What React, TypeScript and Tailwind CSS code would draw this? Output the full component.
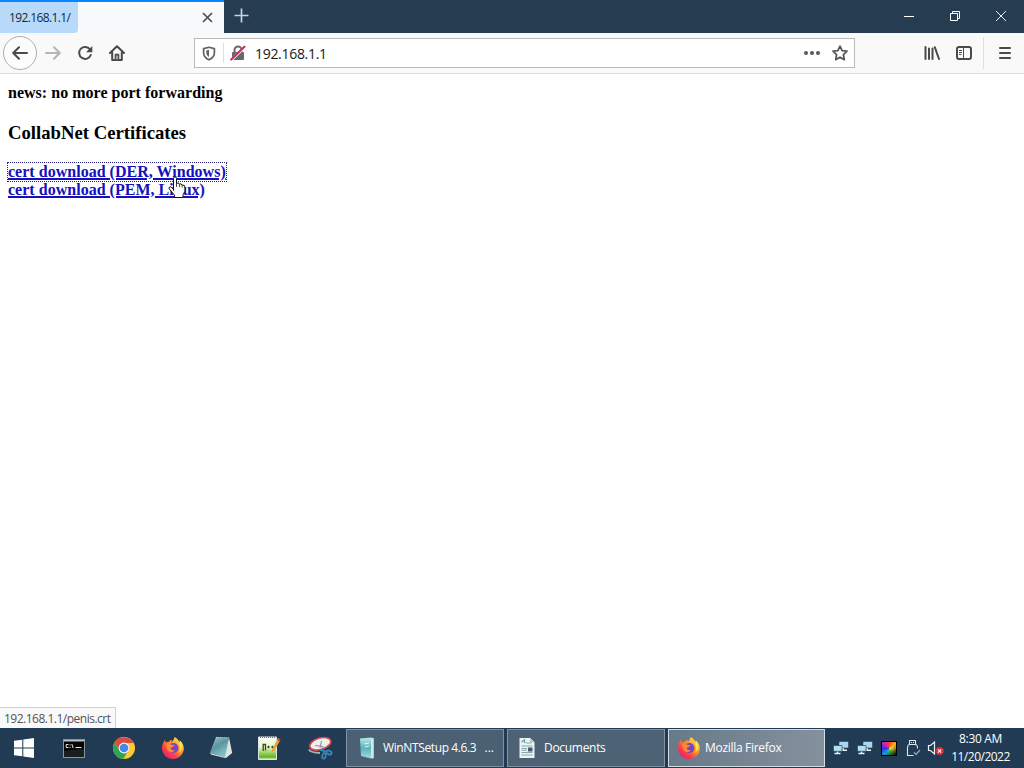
import React from 'react';

interface IconProps {
  className?: string;
}

const BackIcon: React.FC<IconProps> = ({ className }) => (
  <svg className={className} width="16" height="16" viewBox="0 0 16 16" fill="none" stroke="#4a4a4c" strokeWidth="2" strokeLinecap="round" strokeLinejoin="round">
    <path d="M15 8H1.6M7 2.2L1.2 8L7 13.8" />
  </svg>
);

const ForwardIcon = () => (
  <svg width="16" height="16" viewBox="0 0 16 16" fill="none" stroke="#b5b5b7" strokeWidth="2" strokeLinecap="round" strokeLinejoin="round">
    <path d="M1 8h13.4M9 2.2L14.8 8L9 13.8" />
  </svg>
);

const ReloadIcon = () => (
  <svg width="16" height="16" viewBox="0 0 16 16" fill="none">
    <path d="M13.2 4.6A6 6 0 1 0 13.8 10" stroke="#4a4a4c" strokeWidth="2" strokeLinecap="round" />
    <path d="M15.3 .9V7.2H9z" fill="#4a4a4c" />
  </svg>
);

const HomeIcon = () => (
  <svg width="16" height="16" viewBox="0 0 16 16" fill="none" stroke="#4a4a4c" strokeWidth="2" strokeLinecap="round" strokeLinejoin="round">
    <path d="M1 8L8 1.2L15 8M3.2 7.5V15h9.6V7.5" />
    <path d="M6.2 14V9.2h3.6V14" fill="#4a4a4c" strokeWidth="1" />
    <path d="M8 11v3" stroke="#f9f9fa" strokeWidth="1" />
  </svg>
);

const ShieldIcon = () => (
  <svg width="14" height="15" viewBox="0 0 14 15" fill="none">
    <path d="M7 1.2L12.4 2.6V6.5C12.4 10 10.3 12.4 7 13.8C3.7 12.4 1.6 10 1.6 6.5V2.6z" stroke="#626264" strokeWidth="1.7" strokeLinejoin="round" />
    <path d="M7 3.8V11C5 9.8 4.3 8.4 4.3 6.5V4.4z" fill="#626264" />
  </svg>
);

const LockIcon = () => (
  <svg width="16" height="16" viewBox="0 0 16 16" fill="none">
    <path d="M4.5 8V5a3.5 3.5 0 0 1 7 0v3" stroke="#69696b" strokeWidth="2" />
    <rect x="2" y="7" width="12" height="8" rx="1" fill="#69696b" />
    <path d="M1 15.2L14.8 2" stroke="#fff" strokeWidth="2.8" />
    <path d="M1.2 14.4L14.4 1.8" stroke="#d7264f" strokeWidth="2.1" strokeLinecap="round" />
  </svg>
);

const StarIcon = () => (
  <svg width="16" height="16" viewBox="0 0 16 16" fill="none" stroke="#58585a" strokeWidth="1.8" strokeLinejoin="round">
    <path d="M8 1.2L10.1 5.6L15 6.2L11.4 9.6L12.3 14.6L8 12.2L3.7 14.6L4.6 9.6L1 6.2L5.9 5.6z" />
  </svg>
);

const LibraryIcon = () => (
  <svg width="16" height="16" viewBox="0 0 16 16" fill="none" stroke="#4a4a4c" strokeWidth="2" strokeLinecap="round">
    <path d="M1.5 2v12M5 3.4V14M8.5 3.4V14M10.8 2.2L15 14" />
  </svg>
);

const SidebarIcon = () => (
  <svg width="16" height="14" viewBox="0 0 16 14" fill="none" stroke="#4a4a4c">
    <rect x="1" y="1" width="14" height="12" rx="2" strokeWidth="2" />
    <path d="M7.5 1v12" strokeWidth="1" />
    <path d="M3 4.5h3M3 6.5h3M3 8.5h2.4" strokeWidth="1" />
  </svg>
);

const WindowsLogo = () => (
  <svg width="20" height="20" viewBox="0 0 20 20" fill="#fff">
    <path d="M0 2.8L8.3 1.7V9.5H0zM9.3 1.5L20 0V9.5H9.3zM0 10.5H8.3V18.3L0 17.2zM9.3 10.5H20V20L9.3 18.5z" />
  </svg>
);

const TerminalIcon = () => (
  <svg width="22" height="19" viewBox="0 0 22 19" fill="none">
    <rect x=".5" y=".5" width="21" height="18" fill="#050505" stroke="#8d9498" />
    <path d="M1 1h20v1.5H1z" fill="#b9bec1" />
    <path d="M5.5 5.5H3.2v3h2.3M7 5.5v1M7 8v1M8.8 5l1.4 4M12.5 8.5h6" stroke="#e6e6e6" />
    <path d="M1 12L21 9.5V18H1z" fill="#1c1d1f" />
  </svg>
);

const ChromeIcon = () => (
  <svg width="24" height="24" viewBox="0 0 24 24">
    <circle cx="12" cy="12" r="11" fill="#fbcb32" />
    <path d="M2.5 6.5A11 11 0 0 1 21.6 7H12a5 5 0 0 0-4.7 6.6z" fill="#df4a3c" />
    <path d="M2.5 6.5A11 11 0 0 0 11.3 23L16.2 14.6A5 5 0 0 1 7.5 14.3z" fill="#30a455" />
    <circle cx="12" cy="12" r="5.4" fill="#f2f2f2" />
    <circle cx="12" cy="12" r="4.3" fill="#4688e8" />
  </svg>
);

const FirefoxIcon = () => (
  <svg width="24" height="24" viewBox="0 0 24 24">
    <defs>
      <linearGradient id="fox" x1=".9" y1=".1" x2=".2" y2=".9">
        <stop offset="0" stopColor="#ffe34a" />
        <stop offset=".4" stopColor="#ff9a28" />
        <stop offset=".72" stopColor="#ff4545" />
        <stop offset="1" stopColor="#e62470" />
      </linearGradient>
    </defs>
    <path d="M4.2 3.6C4 5 4.4 5.8 4.8 6.4C5.8 5.8 6.8 5.6 8 5.7C9 4.4 10 4 11 4C10.4 5 10.3 5.6 10.5 6.2C12 5 13 3.4 13.4 1C16.2 2.3 17.6 4.4 18.5 6.2C18.8 5.6 18.8 5 18.6 4.2C21.8 6.7 23.2 10 22.8 13.5C22 19 17.5 23 12 23C6 23 1 18.3 1 12.5C1 9 2.2 6 4.2 3.6z" fill="url(#fox)" />
    <path d="M13.6 1.4C16.6 3.4 18 6 18.2 8.8C19.8 12 19 15.6 16.6 17.4C20.8 15.6 22.2 11 20.8 7.6C20.4 6.5 19.6 5.4 18.9 4.8C18.8 6 18.8 6.4 18.4 7C17.4 4.5 15.9 2.4 13.6 1.4z" fill="#ffe052" />
    <circle cx="12.4" cy="12" r="5" fill="#7546c8" />
    <path d="M5 8.2C7 7 9 7.2 10.2 8.8C11.4 9 12.6 9 13.4 9.4C12.6 11 10.4 10.8 9.6 12.2C10 14 12 14.8 14 13.7C12.8 16.6 9.4 16.9 7.2 14.8C5.6 13.2 5 10.8 5 8.2z" fill="#ff8738" />
  </svg>
);

const NotepadIcon = () => (
  <svg width="24" height="24" viewBox="0 0 24 24">
    <defs>
      <linearGradient id="note" x1="0" y1="0" x2=".6" y2="1">
        <stop offset="0" stopColor="#a5c9cc" />
        <stop offset=".5" stopColor="#5d959e" />
        <stop offset="1" stopColor="#8ac6ca" />
      </linearGradient>
    </defs>
    <path d="M20 1.6L23.2 17L17 22L14.5 20z" fill="#dfe4e2" />
    <path d="M7 1L20 1.6L16.2 21L.8 17z" fill="url(#note)" />
    <path d="M.8 17L16.2 21L17 22.2L2.4 18.8z" fill="#d1dad9" />
    <path d="M7.2 1.4L20 2" stroke="#c7dadb" strokeDasharray="1 1" />
  </svg>
);

const NotepadPlusIcon = () => (
  <svg width="24" height="24" viewBox="0 0 24 24">
    <defs>
      <linearGradient id="npp" x1="0" y1="0" x2="0" y2="1">
        <stop offset="0" stopColor="#fff" />
        <stop offset=".45" stopColor="#e8f6c8" />
        <stop offset=".9" stopColor="#5fb51c" />
        <stop offset="1" stopColor="#f0f5ea" />
      </linearGradient>
    </defs>
    <path d="M1.5 1h18v22.5h-18z" fill="url(#npp)" stroke="#dfe6da" strokeWidth="1" />
    <path d="M3 1.5h16" stroke="#667078" strokeDasharray="1 1" />
    <path d="M6.2 15V8.5h2.3v6" fill="none" stroke="#364925" strokeWidth="1.3" />
    <path d="M10 11h3M14 11h3M11.5 9.8v2.4M15.5 9.8v2.4" stroke="#364925" />
    <path d="M21 2L23.4 4L17.5 14.5L14.6 16.4L15.4 12.8z" fill="#e5a434" />
    <path d="M21 2L23.4 4L22.4 5.6L20 3.7z" fill="#c94c3e" />
  </svg>
);

const SnippingIcon = () => (
  <svg width="26" height="24" viewBox="0 0 26 24" fill="none">
    <path d="M2 13.5Q3 16.5 13 17" stroke="#a8afb5" strokeWidth="2" />
    <ellipse cx="13.3" cy="7.8" rx="10.8" ry="5.7" transform="rotate(-17 13.3 7.8)" fill="#f1efed" stroke="#d9464c" strokeWidth="1.6" />
    <path d="M8 9.5L16.5 10.5M13 12L14.5 5" stroke="#8a9196" strokeWidth="1.1" />
    <ellipse cx="17" cy="20" rx="1.7" ry="2.6" transform="rotate(15 17 20)" stroke="#3686b5" strokeWidth="1.8" />
    <ellipse cx="22" cy="16.5" rx="2.7" ry="1.8" transform="rotate(25 22 16.5)" stroke="#3686b5" strokeWidth="1.8" />
    <path d="M15.5 11.5L17.5 18M13 14L20 15.8" stroke="#3686b5" strokeWidth="1.6" />
  </svg>
);

const SetupIcon = () => (
  <svg width="16" height="24" viewBox="0 0 16 24">
    <defs>
      <linearGradient id="setup" x1="0" y1="0" x2="0" y2="1">
        <stop offset="0" stopColor="#b8eaec" />
        <stop offset=".5" stopColor="#58b4bd" />
        <stop offset="1" stopColor="#a0dde0" />
      </linearGradient>
    </defs>
    <path d="M0 2.5L11 1.5V22.5L1 20z" fill="url(#setup)" />
    <path d="M11 1.5L13.8 2.3V22.2L11 22.5z" fill="#cfe9e9" />
    <path d="M4 8L9 7M5 11l4-1" stroke="#dcf6f6" />
  </svg>
);

const DocumentIcon = () => (
  <svg width="16" height="22" viewBox="0 0 16 22">
    <path d="M.5 1h10.7L15.5 5.3V21H.5z" fill="#edf2f4" />
    <path d="M11 1v4.5h4.5z" fill="#bac8cd" />
    <path d="M2.5 5L5.5 2.8V6" fill="none" stroke="#5ca5aa" strokeWidth="1.2" />
    <path d="M6.5 6h6M2.5 9h11M2.5 15.5h11M2.5 18h11M2.5 11.5H8M2.5 13.2H8" stroke="#8ba6b3" />
    <path d="M9 10.5h4.5v4H9z" fill="#435a6a" />
  </svg>
);

const NetworkIcon = () => (
  <svg width="16" height="16" viewBox="0 0 16 16">
    <path d="M6 1.5h9.5v6.5H6z" fill="#a8d8ee" stroke="#27445a" strokeWidth=".6" />
    <path d="M10 8v2.2h4M1.5 13.5h6M4.5 11v2.5" stroke="#edf4f7" strokeWidth="1.5" fill="none" />
    <path d="M.5 5.5h8.5v5.8H.5z" fill="#b5e0f2" stroke="#27445a" strokeWidth=".7" />
  </svg>
);

const UsbIcon = () => (
  <svg width="15" height="18" viewBox="0 0 15 18" fill="none" stroke="#dce4e9">
    <path d="M3.5 5.5V1.5h6v4M1.5 9.5Q1.5 5.5 3.5 5.5h6Q11.5 5.5 11.5 9.5M1.5 9v7.5h6M5.5 3v1M7.5 3v1" strokeWidth="1.1" />
    <path d="M8 13.2l2 2.3l4-4.5" stroke="#91a2ad" strokeWidth="1.3" />
  </svg>
);

const SpeakerIcon = () => (
  <svg width="17" height="16" viewBox="0 0 17 16" fill="none">
    <path d="M1.5 5.5h2L7.5 2v12L3.5 10.5h-2z" stroke="#edf4f7" strokeWidth="1.2" />
    <circle cx="12.6" cy="11" r="4.2" fill="#d52f3a" />
    <path d="M10.9 9.3l3.4 3.4M14.3 9.3l-3.4 3.4" stroke="#fff" strokeWidth="1.2" />
  </svg>
);

const ColorIcon = () => (
  <div className="h-[15px] w-4 border border-black bg-[conic-gradient(from_0deg,#ff3b1f,#ff9d1c,#ffe02e,#8fe02c,#19d58a,#168de8,#3b30d8,#c126c5,#ff3b1f)] bg-origin-border">
    <div className="h-full w-full bg-linear-to-tl from-black via-transparent via-45% to-transparent" />
  </div>
);

const HandCursor = () => (
  <svg className="absolute left-[168px] top-[102px]" width="18" height="23" viewBox="0 0 18 23">
    <path d="M5.5 14.5V2.5Q5.5.8 7 .8T8.5 2.5V7.5Q11 6 11.3 8.2Q13.6 7 14 9.2Q16.9 8.4 16.9 11V15.2L15 18.8V21.5H6.5V19.2L1.2 12.8Q.4 11 2.4 10.8Q3.5 11 5.5 13.4z" fill="#fff" stroke="#111" strokeWidth="1" />
    <path d="M8.5 7.5v3.5M11.4 8.5v2.5M14.1 9.5v2" stroke="#111" strokeWidth=".8" />
  </svg>
);

const TabStrip = () => (
  <div className="flex h-[33px] bg-[#263c50]">
    <div className="flex w-56 items-center justify-between border-t-2 border-[#0a84ff] bg-[#f8f9fa] pr-[11px]">
      <div className="flex h-[31px] w-[78px] items-center rounded-br-sm bg-[#b7d9fa] pl-[9px]">
        <span className="text-xs tracking-[-0.62px] text-[#15283b]">192.168.1.1/</span>
      </div>
      <svg width="11" height="11" viewBox="0 0 11 11" stroke="#4a4a4c" strokeWidth="1.6">
        <path d="M1 1l9 9M10 1l-9 9" />
      </svg>
    </div>
    <div className="flex w-[34px] items-center justify-center pb-0.5">
      <svg width="15" height="15" viewBox="0 0 15 15" stroke="#cbd4dc" strokeWidth="1.7">
        <path d="M7.5 .5v14M.5 7.5h14" />
      </svg>
    </div>
    <div className="ml-auto flex h-8">
      <div className="flex w-[46px] items-center justify-center">
        <div className="h-px w-2.5 bg-white" />
      </div>
      <div className="flex w-[46px] items-center justify-center">
        <svg width="10" height="10" viewBox="0 0 10 10" fill="none" stroke="#fff">
          <path d="M.5 2.5h7v7h-7zM2.5 2.5v-2h7v7h-2" />
        </svg>
      </div>
      <div className="flex w-[46px] items-center justify-center">
        <svg width="10" height="10" viewBox="0 0 10 10" stroke="#fff" strokeWidth=".9">
          <path d="M0 0l10 10M10 0l-10 10" />
        </svg>
      </div>
    </div>
  </div>
);

const NavBar = () => (
  <div className="flex h-[41px] items-center border-b border-[#dcdddd] bg-[#f9f9fa]">
    <div className="ml-[3px] flex h-[34px] w-[34px] items-center justify-center rounded-full border border-[#aeaeb0] bg-[#fcfcfc]">
      <BackIcon />
    </div>
    <div className="flex w-8 justify-center"><ForwardIcon /></div>
    <div className="flex w-8 justify-center"><ReloadIcon /></div>
    <div className="flex w-8 justify-center"><HomeIcon /></div>
    <div className="ml-[61px] flex h-[30px] w-[661px] items-center border border-[#b9babc] bg-white pl-[7px] pr-1.5">
      <ShieldIcon />
      <div className="ml-[7px] mr-1.5 h-5 w-px bg-[#dfdfe0]" />
      <LockIcon />
      <span className="ml-[9px] text-[14px] tracking-[-0.3px] text-[#171719]">192.168.1.1</span>
      <div className="ml-auto mr-3 flex gap-[2px]">
        <span className="h-1 w-1 rounded-full bg-[#58585a]" />
        <span className="h-1 w-1 rounded-full bg-[#58585a]" />
        <span className="h-1 w-1 rounded-full bg-[#58585a]" />
      </div>
      <StarIcon />
    </div>
    <div className="ml-[61px] flex w-8 justify-center"><LibraryIcon /></div>
    <div className="flex w-8 justify-center"><SidebarIcon /></div>
    <div className="ml-[3px] h-8 w-px bg-[#dfdfe0]" />
    <div className="ml-[15px] flex w-3 flex-col gap-[3px]">
      <span className="h-0.5 rounded bg-[#4a4a4c]" />
      <span className="h-0.5 rounded bg-[#4a4a4c]" />
      <span className="h-0.5 rounded bg-[#4a4a4c]" />
    </div>
  </div>
);

const PageContent = () => (
  <main className="relative flex flex-1 flex-col bg-white px-2 pt-[9px] font-['Liberation_Serif',serif] font-bold text-black">
    <h4 className="text-[16px] leading-[19px] tracking-[0.02px]">news: no more port forwarding</h4>
    <h3 className="mt-5 text-[18.72px] leading-[22px]">CollabNet Certificates</h3>
    <div className="mt-[19px] flex flex-col items-start text-[16px] leading-[18px] tracking-[0.02px] text-[#150fbe]">
      <a href="#der" className="underline decoration-2 outline-1 outline-dotted outline-[#222288]">cert download (DER, Windows)</a>
      <a href="#pem" className="underline decoration-2">cert download (PEM, Linux)</a>
    </div>
    <HandCursor />
    <div className="absolute bottom-0 left-0 flex h-[21px] w-[116px] items-center border-r border-t border-[#d1d1d1] bg-[#f9f9fa] pl-1 pt-0.5 font-['Open_Sans',sans-serif] text-xs font-normal tracking-[-0.5px] text-[#535355]">
      <span className="whitespace-nowrap">192.168.1.1/penis.crt</span>
    </div>
  </main>
);

const Taskbar = () => (
  <footer className="flex h-10 items-center bg-[#203b53] text-xs text-white">
    <div className="flex w-[49px] justify-center pr-px"><WindowsLogo /></div>
    <div className="flex w-[50px] justify-center"><TerminalIcon /></div>
    <div className="flex w-[49px] justify-center"><ChromeIcon /></div>
    <div className="flex w-[49px] justify-center"><FirefoxIcon /></div>
    <div className="flex w-[49px] justify-center pr-0.5"><NotepadIcon /></div>
    <div className="flex w-[49px] justify-center pr-1"><NotepadPlusIcon /></div>
    <div className="flex w-[51px] justify-center pr-0.5"><SnippingIcon /></div>
    <div className="flex h-full gap-[3px] py-px">
      <div className="flex w-[158px] items-center border border-[#8292a0] bg-[#4b6072] pl-[13px]">
        <SetupIcon />
        <span className="ml-[7px] tracking-[-0.38px]">WinNTSetup 4.6.3</span>
        <span className="ml-auto mr-[9px]">...</span>
      </div>
      <div className="flex w-[158px] items-center border border-[#8292a0] bg-[#4d6274] pl-[11px]">
        <DocumentIcon />
        <span className="ml-[9px] tracking-[-0.3px]">Documents</span>
      </div>
      <div className="flex w-[157px] items-center border border-[#d3dce2] bg-linear-to-r from-[#68798a] to-[#85919d] pl-2">
        <FirefoxIcon />
        <span className="ml-1 tracking-[-0.3px]">Mozilla Firefox</span>
      </div>
    </div>
    <div className="ml-2 flex items-center">
      <div className="w-6"><NetworkIcon /></div>
      <div className="w-6"><NetworkIcon /></div>
      <div className="w-[25px]"><ColorIcon /></div>
      <div className="w-[21px]"><UsbIcon /></div>
      <SpeakerIcon />
    </div>
    <div className="ml-auto flex w-[80px] flex-col items-center pr-[7px] leading-[18px]">
      <span className="tracking-[-0.35px]">8:30 AM</span>
      <span className="tracking-[-0.5px]">11/20/2022</span>
    </div>
  </footer>
);

export default function App() {
  return (
    <div className="flex h-screen w-full flex-col overflow-hidden font-['Open_Sans',sans-serif]">
      <TabStrip />
      <NavBar />
      <PageContent />
      <Taskbar />
    </div>
  );
}
